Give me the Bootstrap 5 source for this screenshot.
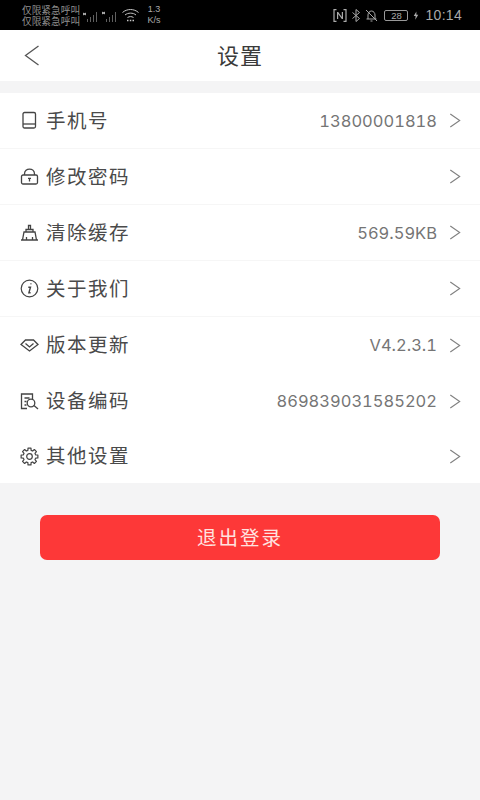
<!DOCTYPE html>
<html lang="zh">
<head>
<meta charset="utf-8">
<title>设置</title>
<link rel="stylesheet" href="https://cdn.jsdelivr.net/npm/bootstrap@5.3.0/dist/css/bootstrap.min.css">
<style>
html,body{height:800px;overflow:hidden}
body{background:#f4f4f5;font-family:"Liberation Sans","Noto Sans CJK SC",sans-serif;color:#333}
.sbar{height:30px;background:#000;color:#9a9a9a;padding:0 18px 0 22px}
.sim{font-size:9.7px;line-height:11px;color:#8f8f8f;width:60px;white-space:nowrap;padding-top:2px}
.speed{font-size:9px;line-height:11px;text-align:center;color:#aaa;margin-left:7px;width:16px}
.clock{font-size:14px;color:#aaa;letter-spacing:.3px;margin-left:6px}
.batt{width:24px;height:11px;border:1px solid #999;border-radius:2px;font-size:9.5px;line-height:9px;text-align:center;color:#aaa;margin-left:6px}
.boltmark{margin-left:5px}
.topbar{height:51px;background:#fff;position:relative}
.topbar h1{font-size:22px;letter-spacing:1px;font-weight:400;margin:0;color:#3a3a3a;line-height:54px}
.backbtn{position:absolute;left:24px;top:15px;display:block}
.setlist{margin-top:12px;background:#fff}
.setrow{height:56px;padding:0 19px 0 20px;border-bottom:1px solid #f6f6f6}
.setrow.noline{border-bottom:0}
.setrow.lastrow{height:54px}
.ico{width:19px;height:19px;margin-right:7px;flex:none}
.lbl{font-size:19.5px;color:#4a4a4a;letter-spacing:1.5px;line-height:24px}
.val{font-family:Inter,"Liberation Sans",sans-serif;font-size:16.5px;font-variant-numeric:tabular-nums;color:#757575;margin-right:12px;line-height:20px}
.chev{flex:none}
.quitwrap{padding:32px 40px 0}
.quitbtn{height:45px;width:100%;background:#fd3838;border:0;border-radius:7px;color:#ffe3e0;font-size:19.5px;letter-spacing:2px;padding:2px 0 0}
.quitbtn:hover{background:#fd3838;color:#ffe3e0}
</style>
</head>
<body>
<div class="sbar d-flex align-items-center">
  <div class="sim"><div>仅限紧急呼叫</div><div>仅限紧急呼叫</div></div>
  <svg class="flex-shrink-0" width="36" height="16" viewBox="0 0 36 16" fill="none" stroke="#5f5f5f" stroke-width="1">
    <path d="M1 6l3 2m0-2l-3 2" stroke="#ccc"/><path d="M5.500 15v-3M8.500 15v-5M11.500 15v-7M14.500 15V5"/>
    <path d="M20 5l3 2m0-2l-3 2" stroke="#ccc"/><path d="M24.500 15v-3M27.500 15v-5M30.500 15v-7M33.500 15V5"/>
  </svg>
  <svg class="flex-shrink-0 ms-1" width="17" height="14" viewBox="0 0 17 14" fill="none" stroke="#c4c4c4" stroke-width="1"><path d="M.5 4.500c4.500-4 11.500-4 16 0M3 7c3-2.500 8-2.500 11 0M5.500 9.500c2-1.200 4-1.200 6 0"/><path d="M5 12.500h1.500M7.800 12.500h1.500M10.500 12.500H12" stroke-width="1.500"/></svg>
  <div class="speed"><div>1.3</div><div>K/s</div></div>
  <div class="ms-auto d-flex align-items-center">
    <svg width="14" height="13" viewBox="0 0 14 13" fill="none" stroke="#aaa" stroke-width="1.200"><path d="M3.500.7H1v11.600h2.500M10.500.7H13v11.600h-2.500"/><path d="M4 3v7h1.200V5l3.600 5H10V3H8.800v5L5.200 3z" fill="#aaa" stroke="none"/></svg>
    <svg class="ms-1" width="10" height="13" viewBox="0 0 10 13" fill="none" stroke="#aaa"><path d="M1.500 3.500l7 6-3.500 3V.5l3.500 3-7 6"/></svg>
    <svg class="ms-1" width="13" height="13" viewBox="0 0 13 13" fill="none" stroke="#aaa"><path d="M3 10V6c0-2 1.500-4 3.500-4s3.500 2 3.500 4v4M1.500 10h10M5.500 12h2M1 1l11 11"/></svg>
    <div class="batt">28</div>
    <svg class="boltmark" width="6" height="11" viewBox="0 0 8 11" fill="#aaa"><path d="M4.500 0L1 6h2.500L3 11l4-6.500H4.500z"/></svg>
    <div class="clock">10:14</div>
  </div>
</div>

<div class="topbar text-center">
  <svg class="backbtn" width="16" height="21" viewBox="0 0 16 21" fill="none" stroke="#555" stroke-width="1.300"><path d="M14.500 1L1.500 10.500 14.500 20"/></svg>
  <h1>设置</h1>
</div>

<div class="setlist">
  <div class="setrow d-flex align-items-center">
    <svg class="ico" viewBox="0 0 19 19" fill="none" stroke="#444" stroke-width="1.300"><rect x="3" y="1.500" width="12.500" height="15.500" rx="1.500"/><path d="M3 13h12.500"/></svg>
    <span class="lbl">手机号</span>
    <span class="val ms-auto">13800001818</span>
    <svg class="chev" width="12" height="15" viewBox="0 0 12 16" fill="none" stroke="#808080" stroke-width="1.200"><path d="M1 1l10 7-10 7"/></svg>
  </div>
  <div class="setrow d-flex align-items-center">
    <svg class="ico" viewBox="0 0 19 19" fill="none" stroke="#444" stroke-width="1.300"><rect x="1.500" y="8" width="16" height="9" rx="1.500"/><path d="M4.500 8V7c0-6.500 10-6.500 10 0v1"/><path d="M9.500 11v3.500M8 11.300h3"/></svg>
    <span class="lbl">修改密码</span>
    <svg class="chev ms-auto" width="12" height="15" viewBox="0 0 12 16" fill="none" stroke="#808080" stroke-width="1.200"><path d="M1 1l10 7-10 7"/></svg>
  </div>
  <div class="setrow d-flex align-items-center">
    <svg class="ico" viewBox="0 0 19 19" fill="none" stroke="#444" stroke-width="1.300"><path d="M1 17h17M2.500 17l1.500-8h11l1.500 8M6 9V6.500h7V9M8.500 6.500V2.500h2v4M6.500 17v-3M12.500 17v-3"/></svg>
    <span class="lbl">清除缓存</span>
    <span class="val ms-auto">569.59KB</span>
    <svg class="chev" width="12" height="15" viewBox="0 0 12 16" fill="none" stroke="#808080" stroke-width="1.200"><path d="M1 1l10 7-10 7"/></svg>
  </div>
  <div class="setrow d-flex align-items-center">
    <svg class="ico" viewBox="0 0 19 19" fill="none" stroke="#444" stroke-width="1.200"><circle cx="9.500" cy="9.500" r="8.300"/><path d="M10.500 4.800h.9M8.300 8.300h2.200l-1.600 5.400h1.700" stroke-width="1.400"/></svg>
    <span class="lbl">关于我们</span>
    <svg class="chev ms-auto" width="12" height="15" viewBox="0 0 12 16" fill="none" stroke="#808080" stroke-width="1.200"><path d="M1 1l10 7-10 7"/></svg>
  </div>
  <div class="setrow d-flex align-items-center noline">
    <svg class="ico" viewBox="0 0 19 19" fill="none" stroke="#444" stroke-width="1.300"><path d="M5.500 4h8l4.500 4.500-8.500 6.500L1 8.500z"/><path d="M5.500 7.500l4 3.500 4-3.500"/></svg>
    <span class="lbl">版本更新</span>
    <span class="val ms-auto">V4.2.3.1</span>
    <svg class="chev" width="12" height="15" viewBox="0 0 12 16" fill="none" stroke="#808080" stroke-width="1.200"><path d="M1 1l10 7-10 7"/></svg>
  </div>
  <div class="setrow d-flex align-items-center noline">
    <svg class="ico" viewBox="0 0 19 19" fill="none" stroke="#444" stroke-width="1.300"><path d="M7 16.500H1.500V2h11v5M4.500 6h5M4.500 9.500h2M4.500 13h2"/><circle cx="11" cy="11" r="3.800"/><path d="M14 13.500l4 3.500"/></svg>
    <span class="lbl">设备编码</span>
    <span class="val ms-auto">869839031585202</span>
    <svg class="chev" width="12" height="15" viewBox="0 0 12 16" fill="none" stroke="#808080" stroke-width="1.200"><path d="M1 1l10 7-10 7"/></svg>
  </div>
  <div class="setrow d-flex align-items-center noline lastrow">
    <svg class="ico" viewBox="0 0 19 19" fill="none" stroke="#444" stroke-width="1.200" stroke-linejoin="round"><path d="M17.870 8.020V10.980L15.590 11.130 14.960 12.650 16.460 14.380 14.380 16.460 12.650 14.960 11.130 15.590 10.980 17.870H8.020L7.870 15.590 6.350 14.960 4.620 16.460 2.540 14.380 4.040 12.650 3.410 11.130 1.130 10.980V8.020L3.410 7.870 4.040 6.350 2.540 4.620 4.620 2.540 6.350 4.040 7.870 3.410 8.020 1.130H10.980L11.130 3.410 12.650 4.040 14.380 2.540 16.460 4.620 14.960 6.350 15.590 7.870z"/><circle cx="9.500" cy="9.500" r="2.800"/></svg>
    <span class="lbl">其他设置</span>
    <svg class="chev ms-auto" width="12" height="15" viewBox="0 0 12 16" fill="none" stroke="#808080" stroke-width="1.200"><path d="M1 1l10 7-10 7"/></svg>
  </div>
</div>

<div class="quitwrap">
  <button type="button" class="btn quitbtn">退出登录</button>
</div>
<script src="https://cdn.jsdelivr.net/npm/bootstrap@5.3.0/dist/js/bootstrap.bundle.min.js"></script>
</body>
</html>
